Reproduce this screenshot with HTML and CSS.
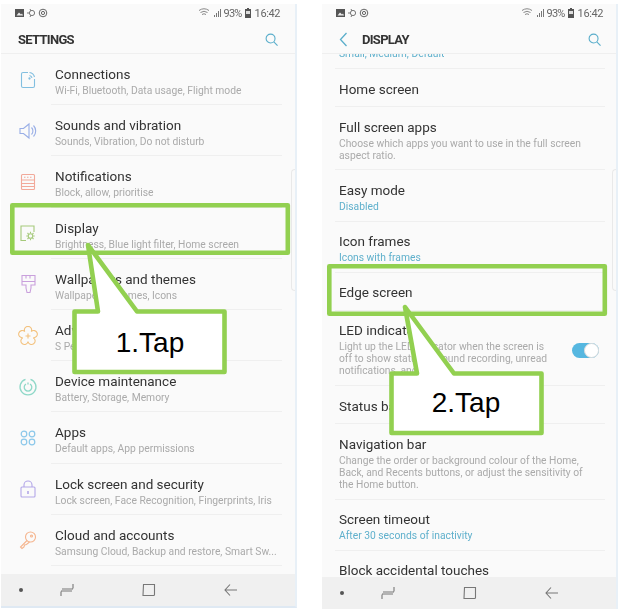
FILE: index.html
```html
<!DOCTYPE html>
<html lang='en'>
<head>
<meta charset='UTF-8'/>
<title>Display settings</title>
<link rel="stylesheet" href="styles.css">
</head>
<body>
<div class="page">

<!-- left phone: settings list -->
<div class="phone phone-left">
  <div class="status">
    <svg class="st-left" width="36" height="10" viewBox="0 0 36 10">
      <path d="M0 1h9v8H0z" fill="#555"/><path d="M1.500 7.500l2.500-3 2 2 1-1 1 2z" fill="#eee"/>
      <circle cx="17" cy="5" r="2.600" fill="none" stroke="#777"/><path d="M12 5h2M15 9l1-2M15 1l1 2" stroke="#777"/>
      <circle cx="28" cy="5" r="3.800" fill="none" stroke="#666"/><circle cx="28" cy="5" r="1.600" fill="none" stroke="#666"/>
    </svg>
    <div class="st-right">
      <svg width="22" height="10" viewBox="0 0 22 10"><path d="M0 2.500q5-3.500 10 0M1.500 4.500q3.500-2.500 7 0M3 6.500q2-1.500 4 0" fill="none" stroke="#888"/><path d="M15 9h1V7h-1zM17 9h1V5h-1zM19 9h1V3h-1zM21 9h1V1h-1z" fill="#777"/></svg>
      <span class="st-pct">93%</span>
      <svg width="6" height="10" viewBox="0 0 6 10"><path d="M2 0h2v1h2v9H0V1h2z" fill="#555"/><path d="M1 3h4v3H1z" fill="#ddd"/></svg>
      <span class="st-time">16:42</span>
    </div>
  </div>
  <div class="head">
    <div class="head-title">SETTINGS</div>
    <svg class="search" width="13" height="13" viewBox="0 0 14 14"><circle cx="6" cy="6" r="4.800" fill="none" stroke="#5aaecb" stroke-width="1.200"/><path d="M9.500 9.500l4 4" stroke="#5aaecb" stroke-width="1.200"/></svg>
  </div>
  <div class="list">
    <div class="row">
      <div class="row-icon"><svg width="20" height="20" viewBox="0 0 20 20" fill="none" stroke="#82bfe0" stroke-width="1.100"><path d="M10 2.500H5a1.500 1.500 0 0 0-1.500 1.500v12a1.500 1.500 0 0 0 1.500 1.500h10a1.500 1.500 0 0 0 1.500-1.500V9"/><path d="M11.500 2.500a6 6 0 0 1 5 4.500M11.500 5.500a3 3 0 0 1 2.500 2.500"/><circle cx="11.500" cy="8.500" r=".6"/></svg></div>
      <div class="row-body"><div class="title">Connections</div><div class="sub">Wi-Fi, Bluetooth, Data usage, Flight mode</div></div>
    </div>
    <div class="row">
      <div class="row-icon"><svg width="20" height="20" viewBox="0 0 20 20" fill="none" stroke="#98aee6" stroke-width="1.100"><path d="M2 7.500h3.500L11 3v14l-5.500-4.500H2z"/><path d="M13.500 6.500a5 5 0 0 1 0 7M15.500 4.500a8 8 0 0 1 0 11"/></svg></div>
      <div class="row-body"><div class="title">Sounds and vibration</div><div class="sub">Sounds, Vibration, Do not disturb</div></div>
    </div>
    <div class="row">
      <div class="row-icon"><svg width="20" height="20" viewBox="0 0 20 20" fill="none" stroke="#f2a99a" stroke-width="1.100"><rect x="3.500" y="2.500" width="13" height="15" rx="1"/><path d="M3.500 8h13M3.500 11.500h13M3.500 14.500h13"/><path d="M6 5.200h8" stroke-dasharray="1.500 1.500"/></svg></div>
      <div class="row-body"><div class="title">Notifications</div><div class="sub">Block, allow, prioritise</div></div>
    </div>
    <div class="row">
      <div class="row-icon"><svg width="20" height="20" viewBox="0 0 20 20" fill="none" stroke="#a5c97a" stroke-width="1.100"><path d="M8 17.500H3V3h13v6"/><circle cx="12.500" cy="13" r="2.300"/><path d="M12.500 8.800v1.400M12.500 15.800v1.400M8.300 13h1.400M15.300 13h1.400M9.500 10l1 1M14.500 15l1 1M15.500 10l-1 1M10.500 15l-1 1"/></svg></div>
      <div class="row-body"><div class="title">Display</div><div class="sub">Brightness, Blue light filter, Home screen</div></div>
    </div>
    <div class="row">
      <div class="row-icon"><svg width="20" height="20" viewBox="0 0 20 20" fill="none" stroke="#c9a0dc" stroke-width="1.100"><path d="M4 1.500h13v9.500h-4v3l-1 4.500H9l-1-4.500v-3H4zM4 7.500h13M8 1.500v3M12 1.500v3"/></svg></div>
      <div class="row-body"><div class="title">Wallpapers and themes</div><div class="sub">Wallpapers, Themes, Icons</div></div>
    </div>
    <div class="row">
      <div class="row-icon"><svg width="20" height="20" viewBox="0 0 20 20" fill="none" stroke="#f3c27f" stroke-width="1.100"><path d="M6.770 5.550A3.600 3.600 0 1 1 13.230 5.550A3.600 3.600 0 1 1 15.230 11.700A3.600 3.600 0 1 1 10 15.500A3.600 3.600 0 1 1 4.770 11.700A3.600 3.600 0 1 1 6.770 5.550Z"/><path d="M10 7.500v5M7.500 10h5"/></svg></div>
      <div class="row-body"><div class="title">Advanced features</div><div class="sub">S Pen, Games, One-handed mode</div></div>
    </div>
    <div class="row">
      <div class="row-icon"><svg width="20" height="20" viewBox="0 0 20 20" fill="none" stroke="#8fd8c8" stroke-width="1.300"><path d="M7.500 2.300a8 8 0 1 0 5 0"/><path d="M8 7a3.800 3.800 0 1 0 4 0"/><path d="M10 5.500v2"/></svg></div>
      <div class="row-body"><div class="title">Device maintenance</div><div class="sub">Battery, Storage, Memory</div></div>
    </div>
    <div class="row">
      <div class="row-icon"><svg width="20" height="20" viewBox="0 0 20 20" fill="none" stroke="#8cc8ea" stroke-width="1.200"><circle cx="6" cy="6" r="2.800"/><circle cx="14" cy="6" r="2.800"/><circle cx="6" cy="14" r="2.800"/><circle cx="14" cy="14" r="2.800"/></svg></div>
      <div class="row-body"><div class="title">Apps</div><div class="sub">Default apps, App permissions</div></div>
    </div>
    <div class="row">
      <div class="row-icon"><svg width="20" height="20" viewBox="0 0 20 20" fill="none" stroke="#b3a7e8" stroke-width="1.100"><rect x="3" y="8" width="14" height="10" rx="1"/><path d="M6 8V6a4 4 0 0 1 8 0v2"/><path d="M10 12v3" stroke-width="1.600"/></svg></div>
      <div class="row-body"><div class="title">Lock screen and security</div><div class="sub">Lock screen, Face Recognition, Fingerprints, Iris</div></div>
    </div>
    <div class="row">
      <div class="row-icon"><svg width="20" height="20" viewBox="0 0 20 20" fill="none" stroke="#f5b58e" stroke-width="1.100"><circle cx="12.500" cy="7" r="5"/><circle cx="13.500" cy="6" r="1"/><path d="M9 10.500l-6.500 6.500 1.500 1.500 2-1.500.5-2 2-.5 3-2.500"/></svg></div>
      <div class="row-body"><div class="title">Cloud and accounts</div><div class="sub">Samsung Cloud, Backup and restore, Smart Sw...</div></div>
    </div>
  </div>
  <div class="nav">
    <span class="nav-dot"></span>
    <svg width="14" height="14" viewBox="0 0 14 14" fill="none" stroke="#777" stroke-width="1.100"><path d="M1 8.500V13M1 8h11M13 1v4.500M2 6h11"/></svg>
    <svg width="14" height="14" viewBox="0 0 14 14" fill="none" stroke="#777" stroke-width="1.100"><path d="M1.500 1.500h11v10a1 1 0 0 1-1 1h-10.500z"/></svg>
    <svg width="14" height="14" viewBox="0 0 14 14" fill="none" stroke="#777" stroke-width="1.100"><path d="M13 7H1M6 1.500L1 7l5 5.500"/></svg>
  </div>
</div>

<!-- right phone: display settings -->
<div class="phone phone-right">
  <div class="status">
    <svg class="st-left" width="36" height="10" viewBox="0 0 36 10">
      <path d="M0 1h9v8H0z" fill="#555"/><path d="M1.500 7.500l2.500-3 2 2 1-1 1 2z" fill="#eee"/>
      <circle cx="17" cy="5" r="2.600" fill="none" stroke="#777"/><path d="M12 5h2M15 9l1-2M15 1l1 2" stroke="#777"/>
      <circle cx="28" cy="5" r="3.800" fill="none" stroke="#666"/><circle cx="28" cy="5" r="1.600" fill="none" stroke="#666"/>
    </svg>
    <div class="st-right">
      <svg width="22" height="10" viewBox="0 0 22 10"><path d="M0 2.500q5-3.500 10 0M1.500 4.500q3.500-2.500 7 0M3 6.500q2-1.500 4 0" fill="none" stroke="#888"/><path d="M15 9h1V7h-1zM17 9h1V5h-1zM19 9h1V3h-1zM21 9h1V1h-1z" fill="#777"/></svg>
      <span class="st-pct">93%</span>
      <svg width="6" height="10" viewBox="0 0 6 10"><path d="M2 0h2v1h2v9H0V1h2z" fill="#555"/><path d="M1 3h4v3H1z" fill="#ddd"/></svg>
      <span class="st-time">16:42</span>
    </div>
  </div>
  <div class="head">
    <svg class="back" width="9" height="15" viewBox="0 0 9 15"><path d="M7.500 1L1.500 7.500l6 6.500" fill="none" stroke="#5aaecb" stroke-width="1.300"/></svg>
    <div class="head-title">DISPLAY</div>
    <svg class="search" width="13" height="13" viewBox="0 0 14 14"><circle cx="6" cy="6" r="4.800" fill="none" stroke="#5aaecb" stroke-width="1.200"/><path d="M9.500 9.500l4 4" stroke="#5aaecb" stroke-width="1.200"/></svg>
  </div>
  <div class="list list-right">
    <div class="set set-cut"><div class="sub blue">Small, Medium, Default</div></div>
    <div class="set"><div class="title">Home screen</div></div>
    <div class="set"><div class="title">Full screen apps</div><div class="sub">Choose which apps you want to use in the full screen<br>aspect ratio.</div></div>
    <div class="set"><div class="title">Easy mode</div><div class="sub blue">Disabled</div></div>
    <div class="set"><div class="title">Icon frames</div><div class="sub blue">Icons with frames</div></div>
    <div class="set"><div class="title">Edge screen</div></div>
    <div class="set set-toggle">
      <div><div class="title">LED indicator</div><div class="sub">Light up the LED indicator when the screen is<br>off to show status of sound recording, unread<br>notifications, and...</div></div>
      <span class="toggle"><span class="knob"></span></span>
    </div>
    <div class="set"><div class="title">Status bar</div></div>
    <div class="set"><div class="title">Navigation bar</div><div class="sub">Change the order or background colour of the Home,<br>Back, and Recents buttons, or adjust the sensitivity of<br>the Home button.</div></div>
    <div class="set"><div class="title">Screen timeout</div><div class="sub blue">After 30 seconds of inactivity</div></div>
    <div class="set"><div class="title">Block accidental touches</div></div>
  </div>
  <div class="nav">
    <span class="nav-dot"></span>
    <svg width="14" height="14" viewBox="0 0 14 14" fill="none" stroke="#777" stroke-width="1.100"><path d="M1 8.500V13M1 8h11M13 1v4.500M2 6h11"/></svg>
    <svg width="14" height="14" viewBox="0 0 14 14" fill="none" stroke="#777" stroke-width="1.100"><path d="M1.500 1.500h11v10a1 1 0 0 1-1 1h-10.500z"/></svg>
    <svg width="14" height="14" viewBox="0 0 14 14" fill="none" stroke="#777" stroke-width="1.100"><path d="M13 7H1M6 1.500L1 7l5 5.500"/></svg>
  </div>
</div>

<!-- green highlights and tap callouts over the phones -->
<svg class="marks" width="622" height="614" viewBox="0 0 622 614">
  <rect class="mark" x="12.300" y="205.300" width="275.500" height="47.500"/>
  <rect class="mark" x="329.300" y="266.300" width="275.500" height="47.500"/>
  <path class="callout" d="M74.500 311.500H98L88 245l49 66.500h87.500V372H74.500Z"/>
  <path class="callout" d="M391.500 373.500H417L405 307l49 66.500h87.500V433H391.500Z"/>
  <text class="tap" x="150" y="352">1.Tap</text>
  <text class="tap" x="466" y="412">2.Tap</text>
</svg>

</div>
</body>
</html>
```

FILE: styles.css
```css
body{
margin: 0;
background-color: #fff;
font-family: Roboto, "Liberation Sans", sans-serif;
}

.page{
position: relative;
width: 622px;
height: 614px;
box-sizing: border-box;
padding: 4px 0 0 1px;
display: flex;
align-items: flex-start;
gap: 25px;
overflow: hidden;
}

.phone{
position: relative;
box-sizing: border-box;
width: 296px;
background-color: #fafafa;
border-right: 2px solid #e8f0f7;
display: flex;
flex-direction: column;
filter: blur(0.35px);
}
.phone-left{
height: 604px;
border-bottom: 2px solid #dfe9f3;
}
.phone-right{
height: 605px;
}
/* the little edge panel handle */
.phone::after{
content: "";
position: absolute;
right: 0;
top: 165px;
width: 4px;
height: 122px;
box-sizing: border-box;
border: 1px solid #e9e9e9;
border-right: none;
border-radius: 4px 0 0 4px;
}

.status{
height: 19px;
box-sizing: border-box;
flex-shrink: 0;
padding: 0 15px 1px 14px;
display: flex;
justify-content: space-between;
align-items: center;
color: #666;
font-size: 11px;
}
.phone-right .status{
padding-right: 13px;
padding-left: 14px;
}
.st-right{
display: flex;
align-items: center;
gap: 3px;
}
.st-pct{
letter-spacing: -0.8px;
}
.st-time{
margin-left: 1px;
letter-spacing: -0.4px;
}

.head{
height: 31px;
box-sizing: border-box;
flex-shrink: 0;
padding: 3px 17px 0 17px;
display: flex;
align-items: center;
border-bottom: 1px solid #efefef;
}
.phone-right .head{
padding-right: 15px;
}
.head-title{
font-size: 13px;
font-weight: 700;
color: #333;
letter-spacing: -0.7px;
}
.back{
margin-right: 14px;
}
.search{
margin-left: auto;
}

.list{
flex: 1;
overflow: hidden;
}
.list-right{
padding: 0 11px 0 13px;
}

.row{
height: 51.2px;
box-sizing: border-box;
display: flex;
}
.row-icon{
width: 50px;
padding-left: 17px;
box-sizing: border-box;
display: flex;
align-items: center;
}
.row-body{
flex: 1;
margin-right: 13px;
padding: 11px 0 0 4px;
border-bottom: 1px solid #efefef;
}

.set{
padding: 10.5px 4px 8.7px 4px;
border-bottom: 1px solid #efefef;
}
.set-cut{
height: 14px;
padding: 0 4px;
overflow: hidden;
}
.set-cut .sub{
margin-top: -6px;
}
.set-toggle{
display: flex;
justify-content: space-between;
align-items: center;
padding-right: 6px;
}

.title{
font-size: 13.5px;
line-height: 18px;
color: #333;
}
.sub{
margin-top: 2px;
margin-bottom: -1px;
font-size: 10.3px;
line-height: 12px;
white-space: nowrap;
color: #aaa;
}
.blue{
color: #5fb0cc;
}

.toggle{
position: relative;
width: 27px;
height: 15px;
margin-top: 3px;
border-radius: 8px;
background-color: #56b7e0;
}
.knob{
position: absolute;
right: 0;
top: 0;
width: 15px;
height: 15px;
box-sizing: border-box;
border-radius: 50%;
background-color: #fff;
border: 1px solid #ddd;
}

.nav{
height: 32px;
flex-shrink: 0;
box-sizing: border-box;
padding: 0 0 0 18px;
background-color: #f0f0f0;
display: flex;
gap: 68px;
align-items: center;
}
.nav-dot{
width: 4px;
height: 4px;
border-radius: 50%;
background-color: #555;
margin-right: -31px;
}

.marks{
position: absolute;
left: 0;
top: 0;
}
.mark{
fill: none;
stroke: #92d050;
stroke-width: 4.600;
stroke-linejoin: round;
}
.callout{
fill: #fff;
stroke: #92d050;
stroke-width: 4.600;
stroke-linejoin: round;
}
.tap{
font-family: "Liberation Sans", sans-serif;
font-size: 28px;
text-anchor: middle;
fill: #000;
}
```
